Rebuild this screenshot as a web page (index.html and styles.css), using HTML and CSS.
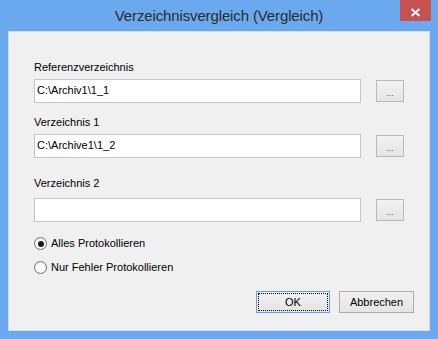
FILE: index.html
```html
<!DOCTYPE html>
<html lang="de">
<head>
    <meta charset="UTF-8">
    <meta name="viewport" content="width=device-width, initial-scale=1.0">
    <title>Verzeichnisvergleich (Vergleich)</title>
    <link rel="stylesheet" href="styles.css">
</head>
<body>
    <div class="window">
        <div class="titlebar">
            <div class="title">Verzeichnisvergleich (Vergleich)</div>
            <div class="close-btn">
                <svg width="31" height="21" viewBox="0 0 31 21">
                    <path d="M11.5 9 L19.5 16 M19.5 9 L11.5 16" stroke="#fff" stroke-width="2" fill="none"/>
                </svg>
            </div>
        </div>

        <div class="client">
            <div class="field-label label-ref">Referenzverzeichnis</div>
            <div class="field-row row-ref">
                <input class="path-input" type="text" value="C:\Archiv1\1_1">
                <button class="browse-btn">...</button>
            </div>

            <div class="field-label label-dir1">Verzeichnis 1</div>
            <div class="field-row row-dir1">
                <input class="path-input" type="text" value="C:\Archive1\1_2">
                <button class="browse-btn">...</button>
            </div>

            <div class="field-label label-dir2">Verzeichnis 2</div>
            <div class="field-row row-dir2">
                <input class="path-input" type="text" value="">
                <button class="browse-btn">...</button>
            </div>

            <label class="radio-row radio-all">
                <span class="radio-dot checked"></span>
                Alles Protokollieren
            </label>
            <label class="radio-row radio-errors">
                <span class="radio-dot"></span>
                Nur Fehler Protokollieren
            </label>

            <div class="dialog-buttons">
                <button class="dlg-btn default">OK</button>
                <button class="dlg-btn">Abbrechen</button>
            </div>
        </div>
    </div>
</body>
</html>
```

FILE: styles.css
```css
html, body {
    margin: 0;
    padding: 0;
}
body {
    width: 438px;
    height: 339px;
    overflow: hidden;
    font-family: "Liberation Sans", Arial, sans-serif;
}
.window {
    box-sizing: border-box;
    width: 438px;
    height: 339px;
    background: #6aa9ee;
    padding: 0 8px 8px 8px;
    display: flex;
    flex-direction: column;
}
.titlebar {
    height: 31px;
    display: grid;
    grid-template-columns: 1fr auto 1fr;
}
.title {
    grid-column: 2;
    font-size: 15px;
    line-height: 31px;
    letter-spacing: -0.13px;
    color: #2b2b2b;
    white-space: nowrap;
}
.close-btn {
    grid-column: 3;
    justify-self: end;
    align-self: start;
    width: 31px;
    height: 21px;
    margin-right: -1px;
    background: #c75050;
}
.close-btn svg {
    display: block;
}
.client {
    flex: 1;
    box-sizing: border-box;
    background: #f0f0f0;
    border: 1px solid #d2dbe6;
    padding: 29px 15px 0 25px;
    font-size: 11px;
    color: #000;
    display: flex;
    flex-direction: column;
}
.field-label {
    height: 13px;
    line-height: 13px;
}
.label-dir1 {
    margin-top: 13px;
}
.label-dir2 {
    margin-top: 19px;
}
.field-row {
    display: flex;
    align-items: center;
    margin-top: 5px;
}
.row-dir2 {
    margin-top: 8px;
}
.path-input {
    box-sizing: border-box;
    width: 327px;
    height: 24px;
    margin: 0;
    padding: 0 2px 2px 2px;
    border: 1px solid #c5c5c5;
    background: #fff;
    font-family: "Liberation Sans", Arial, sans-serif;
    font-size: 11px;
    color: #000;
    outline: none;
}
.browse-btn {
    box-sizing: border-box;
    width: 28px;
    height: 22px;
    margin: 0 0 0 15px;
    padding: 4px 0 0 0;
    border: 1px solid #b8b8b8;
    background: linear-gradient(#f2f2f2, #e5e5e5);
    font-family: "Liberation Sans", Arial, sans-serif;
    font-size: 9px;
    color: #555;
    line-height: 1;
}
.radio-row {
    display: flex;
    align-items: center;
    height: 13px;
    line-height: 13px;
}
.radio-all {
    margin-top: 15px;
}
.radio-errors {
    margin-top: 11px;
}
.radio-dot {
    box-sizing: border-box;
    width: 13px;
    height: 13px;
    margin-right: 4px;
    border: 1px solid #6f6f6f;
    border-radius: 50%;
    background: radial-gradient(circle, #ffffff 40%, #e6e6e6 100%);
    display: flex;
    align-items: center;
    justify-content: center;
}
.radio-dot.checked::after {
    content: "";
    width: 6px;
    height: 6px;
    border-radius: 50%;
    background: #1a1a1a;
}
.dialog-buttons {
    display: flex;
    justify-content: flex-end;
    gap: 9px;
    margin-top: 17px;
}
.dlg-btn {
    box-sizing: border-box;
    width: 75px;
    height: 22px;
    margin: 0;
    padding: 0;
    border: 1px solid #acacac;
    background: linear-gradient(#f0f0f0, #e5e5e5);
    font-family: "Liberation Sans", Arial, sans-serif;
    font-size: 11px;
    color: #000;
}
.dlg-btn.default {
    width: 74px;
    border-color: #5ea2e8;
    outline: 1px dotted #000;
    outline-offset: -3px;
}
```
